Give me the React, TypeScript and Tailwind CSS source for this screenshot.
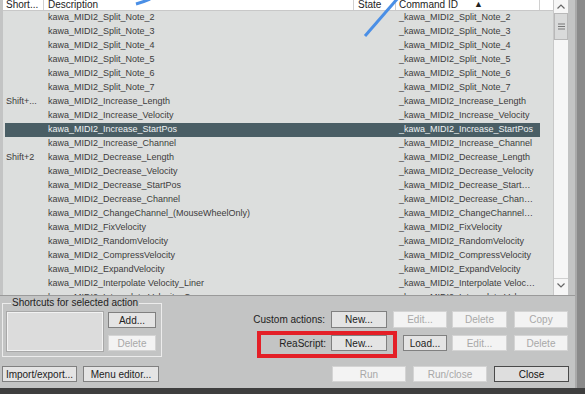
const descs = [
  "kawa_MIDI2_Split_Note_2",
  "kawa_MIDI2_Split_Note_3",
  "kawa_MIDI2_Split_Note_4",
  "kawa_MIDI2_Split_Note_5",
  "kawa_MIDI2_Split_Note_6",
  "kawa_MIDI2_Split_Note_7",
  "kawa_MIDI2_Increase_Length",
  "kawa_MIDI2_Increase_Velocity",
  "kawa_MIDI2_Increase_StartPos",
  "kawa_MIDI2_Increase_Channel",
  "kawa_MIDI2_Decrease_Length",
  "kawa_MIDI2_Decrease_Velocity",
  "kawa_MIDI2_Decrease_StartPos",
  "kawa_MIDI2_Decrease_Channel",
  "kawa_MIDI2_ChangeChannel_(MouseWheelOnly)",
  "kawa_MIDI2_FixVelocity",
  "kawa_MIDI2_RandomVelocity",
  "kawa_MIDI2_CompressVelocity",
  "kawa_MIDI2_ExpandVelocity",
  "kawa_MIDI2_Interpolate Velocity_Liner",
  "kawa_MIDI2_Interpolate Velocity_Curve",
];

const shortcuts: Record<number, string> = { 6: "Shift+...", 10: "Shift+2" };

function Btn({ label, w, disabled, main, className = "" }: { label: string; w: string; disabled?: boolean; main?: boolean; className?: string }) {
  const look = disabled
    ? "bg-[#f3f3f3] border-[#d4d4d4] text-[#a8a8a8]"
    : main
    ? "bg-[#dedede] border-[#4a4a4a] text-[#111]"
    : "bg-[#e4e4e4] border-[#808080] text-[#222]";
  return (
    <div className={`${w} ${look} ${className} h-full border flex items-center justify-center text-[10px]`}>
      {label}
    </div>
  );
}

export default function App() {
  return (
    <div className="w-[585px] h-[394px] flex flex-col bg-[#8c8c8c] font-['Liberation_Sans',sans-serif] text-[10px] overflow-hidden relative">
      <div className="flex h-[388px]">
        <div className="w-[575px] h-full bg-[#c3c4c4] flex flex-col">
          {/* list */}
          <div className="h-[296px] flex pl-[3px] border-b border-[#9a9a9a]">
            <div className="w-[550px] h-full bg-[#dcdedd] flex flex-col overflow-hidden">
              <div className="h-[11px] shrink-0 bg-white flex items-end text-[#222] leading-[11px] overflow-hidden border-b border-[#c8c8c8]">
                <div className="w-[41px] pl-[3px] border-r border-[#d0d0d0] h-full flex items-end whitespace-nowrap">Short...</div>
                <div className="w-[310px] pl-[4px] border-r border-[#d0d0d0] h-full flex items-end">Description</div>
                <div className="w-[42px] pl-[4px] border-r border-[#d0d0d0] h-full flex items-end">State</div>
                <div className="w-[144px] pl-[3px] border-r border-[#d0d0d0] h-full flex items-end whitespace-nowrap">
                  Command ID<span className="ml-[16px] text-[9px]">▲</span>
                </div>
              </div>
              {descs.map((d, i) => {
                const sel = i === 8;
                return (
                  <div
                    key={i}
                    className={`h-[14px] shrink-0 ml-[2px] w-[535px] flex items-center whitespace-nowrap text-[9px] ${sel ? "bg-[#4a5e65] text-[#eef2f3]" : "text-[#3c3c3c]"}`}
                  >
                    <div className="w-[39px] pl-[1px] overflow-hidden">{shortcuts[i] ?? ""}</div>
                    <div className="w-[310px] pl-[4px] overflow-hidden">{d}</div>
                    <div className="w-[42px]" />
                    <div className="w-[140px] pl-[3px] truncate">_{d}</div>
                  </div>
                );
              })}
            </div>
            {/* scrollbar */}
            <div className="w-[15px] h-full bg-[#f6f6f6] border-l border-[#c8c8c8] flex flex-col">
              <div className="h-[13px] flex items-center justify-center">
                <svg width="8" height="5" viewBox="0 0 8 5"><path d="M0.5 4.5 L4 1 L7.5 4.5" fill="none" stroke="#666" strokeWidth="1.2" /></svg>
              </div>
              <div className="h-[27px] bg-[#d9dada] border border-[#b8b8b8] flex items-center justify-center">
                <svg width="7" height="7" viewBox="0 0 7 7"><path d="M0 1h7M0 3.5h7M0 6h7" stroke="#777" strokeWidth="1" /></svg>
              </div>
              <div className="flex-1" />
              <div className="h-[14px] mb-[3px] border-t border-[#d0d0d0] flex items-center justify-center">
                <svg width="8" height="5" viewBox="0 0 8 5"><path d="M0.5 0.5 L4 4 L7.5 0.5" fill="none" stroke="#666" strokeWidth="1.2" /></svg>
              </div>
            </div>
          </div>

          {/* bottom */}
          <div className="flex-1 flex text-[#222]">
            <div className="w-[162px] pl-[2px] flex flex-col">
              <fieldset className="h-[60px] mt-[1px] border border-[#ececec] px-[4px] flex">
                <legend className="ml-[4px] px-[1px] leading-[12px] text-[#222]">Shortcuts for selected action</legend>
                <div className="flex gap-[5px] mt-[3px]">
                  <div className="w-[96px] h-[39px] bg-[#dcdcdc] border border-[#f2f2f2] shadow-[0_0_0_1px_#a8a8a8]" />
                  <div className="flex flex-col gap-[7px]">
                    <div className="h-[16px]"><Btn label="Add..." w="w-[48px]" /></div>
                    <div className="h-[16px]"><Btn label="Delete" w="w-[48px]" disabled /></div>
                  </div>
                </div>
              </fieldset>
              <div className="h-[16px] mt-[9px] flex gap-[6px]">
                <Btn label="Import/export..." w="w-[75px]" />
                <Btn label="Menu editor..." w="w-[76px]" />
              </div>
            </div>

            <div className="flex-1 flex flex-col pr-[7px]">
              <div className="h-[17px] mt-[15px] flex justify-end items-center">
                <span className="mr-[6px]">Custom actions:</span>
                <Btn label="New..." w="w-[56px]" />
                <Btn label="Edit..." w="w-[54px]" disabled className="ml-[6px]" />
                <Btn label="Delete" w="w-[55px]" disabled className="ml-[5px]" />
                <Btn label="Copy" w="w-[54px]" disabled className="ml-[7px]" />
              </div>
              <div className="h-[16px] mt-[7px] flex justify-end items-center">
                <span className="mr-[5px]">ReaScript:</span>
                <Btn label="New..." w="w-[56px]" />
                <Btn label="Load..." w="w-[44px]" className="ml-[16px]" />
                <Btn label="Edit..." w="w-[55px]" disabled className="ml-[5px]" />
                <Btn label="Delete" w="w-[54px]" disabled className="ml-[7px]" />
              </div>
              <div className="h-[16px] mt-[15px] flex justify-end items-center">
                <Btn label="Run" w="w-[74px]" disabled />
                <Btn label="Run/close" w="w-[74px]" disabled className="ml-[7px]" />
                <Btn label="Close" w="w-[75px]" main className="ml-[7px] mr-[-1px]" />
              </div>
            </div>
          </div>
        </div>
        <div className="flex-1 flex">
          <div className="w-[2px] bg-[#a9a9a9]" />
          <div className="flex-1 bg-[#8a8a8a]" />
        </div>
      </div>
      <div className="flex-1 bg-[#3e3e3e]" />

      {/* annotations */}
      <div className="absolute left-[257px] top-[331px] w-[140px] h-[27px] border-[4px] border-[#e41f27]" />
      <svg className="absolute left-0 top-0 pointer-events-none" width="585" height="60">
        <path d="M365 36 L398 -2" stroke="#4a8fe6" strokeWidth="3" />
        <path d="M136 4 Q143 2 150 -1" stroke="#4a8fe6" strokeWidth="3" fill="none" />
      </svg>
    </div>
  );
}
